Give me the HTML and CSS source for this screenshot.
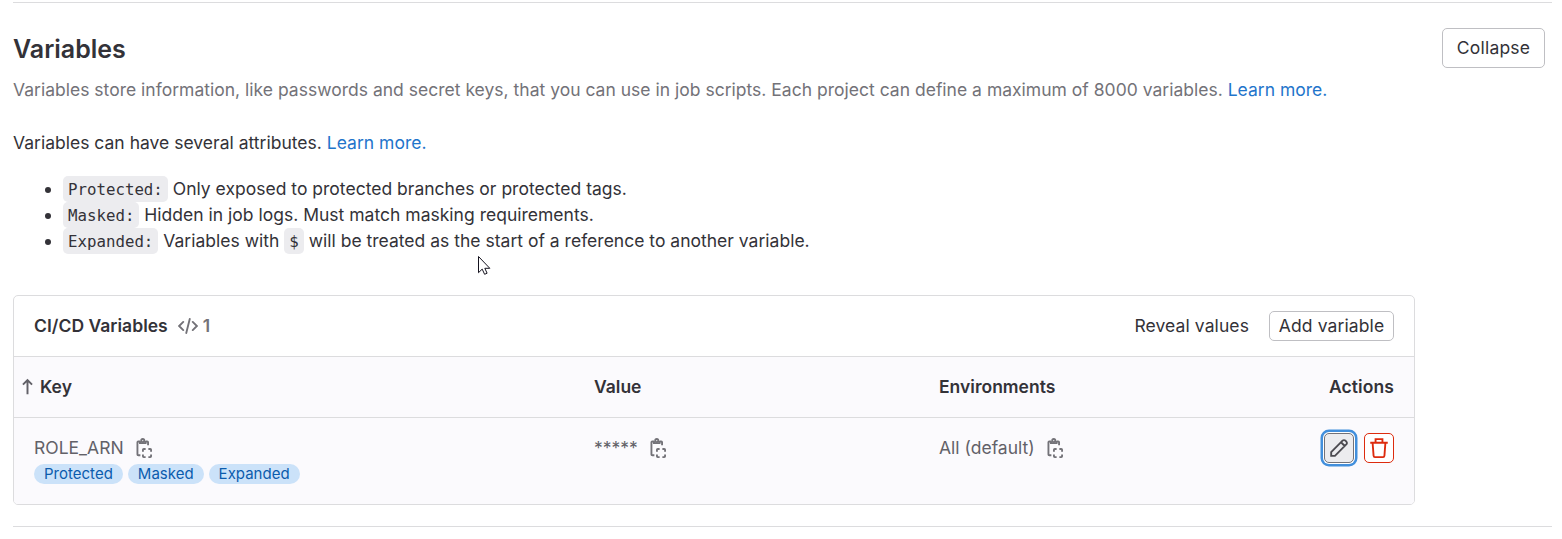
FILE: index.html
```html
<!DOCTYPE html>
<html lang="en">
<head>
<meta charset="utf-8">
<title>Variables</title>
<link rel="stylesheet" href="styles.css">
</head>
<body>
<svg class="sprite" aria-hidden="true">
  <symbol id="copy" viewBox="0 0 16 16">
    <g fill="none" stroke="currentColor" stroke-width="1.5">
      <path d="M4.9 2.75H3.4a.65.65 0 0 0-.65.65v9.7a.65.65 0 0 0 .65.65h1.7M9.2 2.75h1.4a.65.65 0 0 1 .65.65v2.4"/>
      <circle cx="7" cy="2" r="1.25"/>
      <path d="M4.75 2.3v1.8h4.5V2.3"/>
      <path d="M7.15 10.9V9.4a.65.65 0 0 1 .65-.65h1.5M11.5 8.75H13a.65.65 0 0 1 .65.65v1.5M13.65 13.1v1.5a.65.65 0 0 1-.65.65h-1.5M9.3 15.25H7.8a.65.65 0 0 1-.65-.65v-1.5"/>
    </g>
  </symbol>
</svg>
<main class="section">
  <header class="section-header">
    <div>
      <h4 class="title">Variables</h4>
      <p class="description">Variables store information, like passwords and secret keys, that you can use in job scripts. Each project can define a maximum of 8000 variables. <a class="link">Learn more.</a></p>
    </div>
    <button class="button collapse">Collapse</button>
  </header>
  <p class="attributes">Variables can have several attributes. <a class="link">Learn more.</a></p>
  <ul class="attribute-list">
    <li><code>Protected:</code> Only exposed to protected branches or protected tags.</li>
    <li><code>Masked:</code> Hidden in job logs. Must match masking requirements.</li>
    <li><code>Expanded:</code> Variables with <code>$</code> will be treated as the start of a reference to another variable.</li>
  </ul>
  <section class="card">
    <div class="card-header">
      <h5 class="card-title">CI/CD Variables</h5>
      <span class="count">
        <svg class="icon" viewBox="0 0 16 16" fill="none" stroke="currentColor" stroke-width="1.5"><path d="M4.2 4.7.9 8l3.3 3.3M11.8 4.7 15.1 8l-3.3 3.3M9.4 2.4 6.6 13.6" stroke-linecap="round"/></svg>
        <span>1</span>
      </span>
      <span class="reveal">Reveal values</span>
      <button class="button add">Add variable</button>
    </div>
    <div class="row head">
      <div class="key-head"><svg class="sort" viewBox="0 0 12 16" fill="none" stroke="currentColor" stroke-width="1.8"><path d="M6 14.6V2M1.8 5.8 6 1.6l4.2 4.2"/></svg>Key</div>
      <div>Value</div>
      <div>Environments</div>
      <div class="actions-head">Actions</div>
    </div>
    <div class="row body">
      <div>
        <div class="cell"><span class="key-name">ROLE_ARN</span><svg class="icon"><use href="#copy"/></svg></div>
        <div class="badges"><span class="badge">Protected</span><span class="badge">Masked</span><span class="badge">Expanded</span></div>
      </div>
      <div class="cell"><span class="stars">*****</span><svg class="icon"><use href="#copy"/></svg></div>
      <div class="cell"><span class="env">All (default)</span><svg class="icon"><use href="#copy"/></svg></div>
      <div class="actions">
        <button class="icon-button edit" aria-label="Edit"><svg class="icon" viewBox="0 0 16 16" fill="none" stroke="currentColor" stroke-width="1.5"><path d="M1.75 14.25v-3l9.1-9.1a1.6 1.6 0 0 1 2.3 0l.7.7a1.6 1.6 0 0 1 0 2.3l-9.1 9.1zM9.8 3.6l2.6 2.6"/></svg></button>
        <button class="icon-button delete" aria-label="Delete"><svg class="icon" viewBox="0 0 16 16" fill="none" stroke="currentColor" stroke-width="1.5"><path d="M1 3.75h14M5.25 3.5V.9h5.5v2.6M2.9 4l.75 10.1q.1 1.15 1.1 1.15h6.5q1 0 1.1-1.15L13.1 4"/></svg></button>
      </div>
    </div>
  </section>
</main>
<svg class="pointer" viewBox="0 0 13 20"><path d="M.5.5v16.2l3.7-3.6 2.4 5.2 2.5-1.1-2.3-4.9h5z" fill="#fff" stroke="#15131f" stroke-width="1"/></svg>
</body>
</html>
```
FILE: styles.css
```css
* { box-sizing: border-box; }
body {
  margin: 0;
  background: #fff;
  color: #333238;
  font: 17.5px/26px Inter, "Noto Sans", sans-serif;
  letter-spacing: .01px;
}
h4, h5, p, ul { margin: 0; }
.sprite { display: none; }
.section {
  margin: 2px 10px 0 13px;
  height: 525px;
  border-top: 1px solid #dcdcde;
  border-bottom: 1px solid #dcdcde;
}
.section-header {
  display: flex;
  justify-content: space-between;
  padding: 25px 7px 0 0;
  height: 127px;
}
.title { font-size: 25px; line-height: 30px; font-weight: 600; padding-top: 6px; letter-spacing: 0; }
.description { margin-top: 13px; color: #737278; }
.link { color: #1f75cb; }
.button {
  font: inherit;
  color: #333238;
  background: #fff;
  border: 1px solid #bfbfc3;
  border-radius: 5px;
  padding: 0;
  text-align: center;
  letter-spacing: .12px;
}
.collapse { width: 103px; height: 40px; letter-spacing: .2px; }
.attribute-list { margin-top: 20px; padding-left: 50px; }
code {
  font: 15.75px/20px "DejaVu Sans Mono", monospace;
  letter-spacing: 0;
  background: #ececef;
  border-radius: 5px;
  padding: 4px 5px 3px;
}
.card {
  width: 1402px;
  height: 210px;
  margin-top: 41px;
  border: 1px solid #dcdcde;
  border-radius: 5px;
  overflow: hidden;
}
.card-header { display: flex; align-items: center; height: 60px; padding: 0 20px; }
.card-title { font-size: 17.5px; font-weight: 600; letter-spacing: .03px; }
.count { display: flex; align-items: center; gap: 5px; margin-left: 10px; color: #737278; font-weight: 600; }
.reveal { margin-left: auto; margin-right: 20px; letter-spacing: .1px; }
.add { width: 125px; height: 30px; line-height: 26px; }
.icon { width: 20px; height: 20px; display: block; flex: none; }
.row {
  display: grid;
  grid-template-columns: 560px 345px 1fr auto;
  padding: 0 20px;
  background: #fbfafd;
  border-top: 1px solid #dcdcde;
}
.head { height: 61px; align-items: center; font-weight: 600; }
.key-head { display: flex; align-items: center; gap: 6px; margin-left: -13px; }
.sort { width: 13px; height: 18px; color: #626168; }
.actions-head { letter-spacing: .1px; }
.body { height: 87px; padding-top: 15px; color: #626168; }
.cell { display: flex; align-items: center; gap: 10px; height: 30px; }
.cell .icon { color: #737278; }
.badges { display: flex; gap: 5px; margin-top: 1px; }
.badge {
  height: 20px;
  border-radius: 10px;
  padding: 0 10px;
  background: #cbe2f9;
  color: #0b5cad;
  font-size: 15px;
  line-height: 20px;
}
.actions { display: flex; justify-content: flex-end; gap: 10px; }
.icon-button {
  display: flex;
  align-items: center;
  justify-content: center;
  width: 30px;
  height: 30px;
  padding: 0;
  border-radius: 5px;
}
.edit {
  background: #ececef;
  border: 1px solid #737278;
  color: #4c4b51;
  box-shadow: 0 0 0 1px #fff, 0 0 0 3.5px #428fdc;
}
.delete { background: #fff; border: 1px solid #dd2b0e; color: #dd2b0e; }
.pointer { position: absolute; left: 478px; top: 256px; width: 13px; height: 20px; }
```
